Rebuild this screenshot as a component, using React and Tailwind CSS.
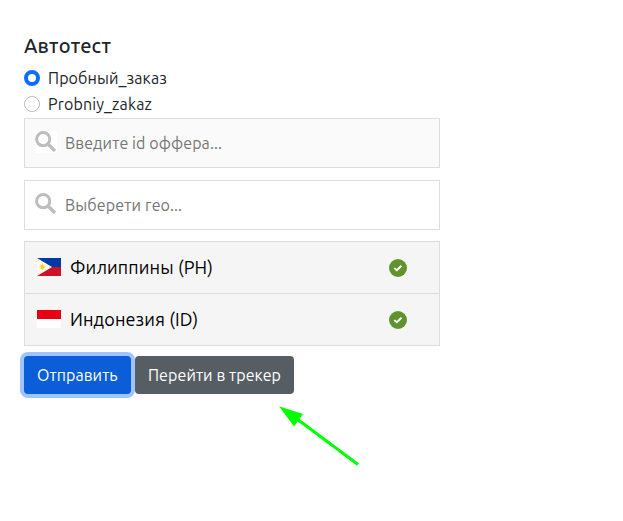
import React from "react";

function SearchIcon() {
  return (
    <svg className="h-[22px] w-[22px] shrink-0" viewBox="0 0 22 22" fill="none" stroke="#bdbdbd">
      <circle cx="8.2" cy="8.2" r="6.6" strokeWidth="3" />
      <path d="M13 13 L20 20" strokeWidth="3.3" />
    </svg>
  );
}

function Check() {
  return (
    <svg className="h-[18px] w-[18px] shrink-0" viewBox="0 0 18 18">
      <circle cx="9" cy="9" r="9" fill="#60932e" />
      <path d="M5.3 9.1 L7.8 11.3 L12.5 6.7" fill="none" stroke="#fff" strokeWidth="1.9" />
    </svg>
  );
}

function PhilippinesFlag() {
  return (
    <svg className="mb-[2px] h-[18px] w-6 shrink-0" viewBox="0 0 24 18">
      <path d="M0 0H24V9H0Z" fill="#0038a8" />
      <path d="M0 9H24V18H0Z" fill="#ce1126" />
      <path d="M0 0L15 9L0 18Z" fill="#fff" />
      <circle cx="5.4" cy="9" r="2" fill="#fcd116" />
      <path d="M5.4 5.4V12.6M1.8 9H9M2.9 6.5L7.9 11.5M2.9 11.5L7.9 6.5" stroke="#fcd116" strokeWidth=".7" />
      <path d="M.7 2.1h1.2M.7 15.9h1.2M12 9h1.2" stroke="#fcd116" strokeWidth="1" />
    </svg>
  );
}

function IndonesiaFlag() {
  return (
    <svg className="mb-[2px] h-[18px] w-6 shrink-0" viewBox="0 0 24 18">
      <path d="M0 0H24V9H0Z" fill="#e70011" />
      <path d="M0 9H24V18H0Z" fill="#fff" />
    </svg>
  );
}

function Country({ flag, children }) {
  return (
    <div className="flex h-[52px] items-center border-b border-[#ddd] pl-3 pr-8">
      {flag}
      <span className="ml-[9px] grow text-[18px] tracking-[0.12px] text-black">{children}</span>
      <Check />
    </div>
  );
}

export default function App() {
  return (
    <main className="relative h-[521px] w-[623px] overflow-hidden bg-white pl-6 pt-[34px] font-['Ubuntu','Noto_Sans',sans-serif] text-base whitespace-nowrap text-[#212529]">
      <h1 className="h-8 text-[20px] leading-6 font-medium tracking-[0.15px]">Автотест</h1>
      <div className="w-[416px]">
        <label className="flex h-[26px] items-center gap-2 pb-[2px]">
          <span className="h-4 w-4 rounded-full border-[4.5px] border-[#0d6efd] bg-white" />
          <span className="tracking-[0.1px]">Пробный_заказ</span>
        </label>
        <label className="flex h-[26px] items-center gap-2 pb-[2px]">
          <span className="h-4 w-4 rounded-full border border-[#bfbfbf] bg-white" />
          <span className="tracking-[0.15px]">Probniy_zakaz</span>
        </label>
        <div className="flex h-[50px] border border-[#ddd] bg-[#fafafa] pl-[10px] text-[#757575]">
          <span className="mt-3 h-[22px] bg-white"><SearchIcon /></span>
          <span className="ml-2 self-center tracking-[0.1px]">Введите id оффера...</span>
        </div>
        <div className="mt-3 flex h-[50px] border border-[#ddd] bg-white pl-[10px] text-[#757575]">
          <span className="mt-3 h-[22px]"><SearchIcon /></span>
          <span className="ml-2 self-center tracking-[0.15px]">Выберети гео...</span>
        </div>
        <div className="mt-[11px] border border-b-0 border-[#ddd] bg-[#f5f5f5]">
          <Country flag={<PhilippinesFlag />}>Филиппины (PH)</Country>
          <Country flag={<IndonesiaFlag />}>Индонезия (ID)</Country>
        </div>
        <div className="mt-[10px] flex gap-1 text-white">
          <button className="h-[38px] w-[107px] rounded bg-[#0b5ed7] pl-[13px] text-left tracking-[0.08px] ring-4 ring-[#9ec5fe]">Отправить</button>
          <button className="relative h-[38px] w-[159px] rounded bg-[#565e64] pl-[13px] text-left tracking-[0.08px]">Перейти в трекер</button>
        </div>
      </div>
      <svg className="absolute left-[270px] top-[395px] h-20 w-[100px]" viewBox="0 0 100 80" fill="#0f0">
        <path d="M9 11.3L33 19L24 31.5Z" />
        <path d="M27 24L88 69.5" stroke="#0f0" strokeWidth="3" />
      </svg>
    </main>
  );
}
